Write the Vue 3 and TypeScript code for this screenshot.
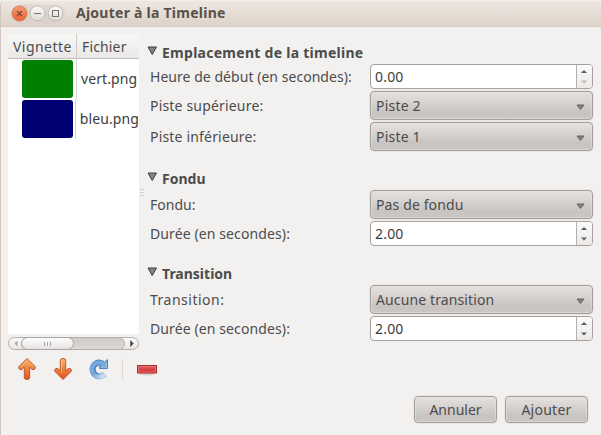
<script setup lang="ts">
import { ref } from 'vue'

interface Field {
  label: string
  kind: 'spin' | 'combo'
  value: string
  fit: string
  valueFit?: string
  atMin?: boolean
}

interface Section {
  title: string
  fit: string
  fields: Field[]
}

const files = ref([
  { name: 'vert.png', tone: 'green' },
  { name: 'bleu.png', tone: 'navy' },
])

const sections = ref<Section[]>([
  {
    title: 'Emplacement de la timeline',
    fit: 'fit-place',
    fields: [
      { label: 'Heure de début (en secondes):', kind: 'spin', value: '0.00', fit: 'fit-start', atMin: true },
      { label: 'Piste supérieure:', kind: 'combo', value: 'Piste 2', fit: 'fit-track-label' },
      { label: 'Piste inférieure:', kind: 'combo', value: 'Piste 1', fit: 'fit-track-label' },
    ],
  },
  {
    title: 'Fondu',
    fit: 'fit-fade',
    fields: [
      { label: 'Fondu:', kind: 'combo', value: 'Pas de fondu', fit: 'fit-fade', valueFit: 'fit-choice' },
      { label: 'Durée (en secondes):', kind: 'spin', value: '2.00', fit: 'fit-length' },
    ],
  },
  {
    title: 'Transition',
    fit: 'fit-fade',
    fields: [
      { label: 'Transition:', kind: 'combo', value: 'Aucune transition', fit: 'fit-transition', valueFit: 'fit-choice' },
      { label: 'Durée (en secondes):', kind: 'spin', value: '2.00', fit: 'fit-length' },
    ],
  },
])
</script>

<template>
  <div class="window">
    <header class="titlebar">
      <div class="controls">
        <svg width="58" height="20" viewBox="0 0 58 20">
          <defs>
            <linearGradient id="close" x1="0" y1="0" x2="0" y2="1">
              <stop offset="0" stop-color="#f79a70" />
              <stop offset="1" stop-color="#ea6336" />
            </linearGradient>
            <linearGradient id="round" x1="0" y1="0" x2="0" y2="1">
              <stop offset="0" stop-color="#fcfbfa" />
              <stop offset="1" stop-color="#ded9d4" />
            </linearGradient>
          </defs>
          <rect x="1" y="1.5" width="54" height="18" rx="9" fill="#d8cfc7" opacity=".6" />
          <circle cx="9.5" cy="10.5" r="7.6" fill="url(#close)" stroke="#c9755a" stroke-width=".7" />
          <circle cx="27.5" cy="10.5" r="7.4" fill="url(#round)" stroke="#b8aea6" stroke-width=".7" />
          <circle cx="45.5" cy="10.5" r="7.4" fill="url(#round)" stroke="#b8aea6" stroke-width=".7" />
          <path d="M7 8l5 5M12 8l-5 5" stroke="#7c4330" stroke-width="1.2" />
          <path d="M24 10.5h7" stroke="#77726b" stroke-width="1" />
          <rect x="42.5" y="7.5" width="6" height="6" fill="none" stroke="#77726b" />
        </svg>
      </div>
      <h1>Ajouter à la Timeline</h1>
    </header>

    <main class="content">
      <section class="browser">
        <div class="list">
          <div class="list-head">
            <span class="col-thumb">Vignette</span>
            <span class="col-file">Fichier</span>
          </div>
          <div v-for="file in files" :key="file.name" class="list-row">
            <div class="cell-thumb"><i class="thumb" :class="file.tone" /></div>
            <span class="cell-name">{{ file.name }}</span>
          </div>
        </div>

        <div class="scrollbar">
          <svg class="scroll-arrow" width="12" height="13" viewBox="0 0 12 13"><path d="M8.5 3.5v6L5.5 6.500z" fill="#aaa6a3" /></svg>
          <div class="trough"><div class="slider"><i /><i /><i /></div></div>
          <svg class="scroll-arrow" width="13" height="13" viewBox="0 0 13 13"><path d="M5.500 3.500v6l3-3z" fill="#4c4c4c" stroke="#4c4c4c" stroke-width=".5" /></svg>
        </div>

        <div class="toolbar">
          <svg class="tool" width="20" height="24" viewBox="0 0 20 24">
            <defs>
              <linearGradient id="up" x1="0" y1="0" x2="0" y2="1">
                <stop offset="0" stop-color="#f5b467" />
                <stop offset="1" stop-color="#e5501b" />
              </linearGradient>
            </defs>
            <path d="M10 1.500L18 9.500Q19 11 17.500 12.200Q16 13.200 14.700 12L12.700 10.200V20.500Q12.700 22.500 10 22.500Q7.300 22.500 7.300 20.500V10.200L5.300 12Q4 13.200 2.500 12.200Q1 11 2 9.500Z" fill="url(#up)" stroke="#b85a2c" stroke-linejoin="round" />
            <path d="M3.500 10.300L10 3.500L16.500 10.300" fill="none" stroke="#f8c893" stroke-width=".8" opacity=".8" />
          </svg>
          <svg class="tool" width="20" height="24" viewBox="0 0 20 24">
            <path d="M10 22.500L18 14.500Q19 13 17.500 11.800Q16 10.800 14.700 12L12.700 13.800V3.500Q12.700 1.500 10 1.500Q7.300 1.500 7.300 3.500V13.800L5.300 12Q4 10.800 2.500 11.800Q1 13 2 14.500Z" fill="url(#up)" stroke="#b85a2c" stroke-linejoin="round" />
            <path d="M8.500 15.500V4Q8.500 2.800 10 2.800Q11.500 2.800 11.500 4" fill="none" stroke="#f8c893" stroke-width=".8" opacity=".8" />
          </svg>
          <svg class="tool redo" width="22" height="24" viewBox="0 0 22 24">
            <defs>
              <linearGradient id="fade" x1="0" y1="0" x2="1" y2="1">
                <stop offset=".6" stop-color="#4e87bf" />
                <stop offset=".95" stop-color="#b9d1ea" />
              </linearGradient>
              <linearGradient id="fade-inner" x1="0" y1="0" x2="1" y2="1">
                <stop offset=".5" stop-color="#76a8db" />
                <stop offset=".95" stop-color="#cfe0f1" />
              </linearGradient>
            </defs>
            <path d="M14.800 6.800Q12.800 5.500 10.800 5.500A7 7 0 1 0 17 17" fill="none" stroke="url(#fade)" stroke-width="6" />
            <path d="M16.500 5L19.500 2.500V11.500H11.500V9.500L13 8.500Z" fill="#76a8db" stroke="#4e87bf" stroke-linejoin="round" />
            <path d="M16 7.400Q13.500 5.500 10.800 5.500A7 7 0 1 0 16.500 16.500" fill="none" stroke="url(#fade-inner)" stroke-width="4" />
            <path d="M13.500 10.200H18.300V5.200" fill="none" stroke="#a6c9ec" stroke-width=".8" />
          </svg>
          <i class="divider" />
          <svg class="tool minus" width="22" height="14" viewBox="0 0 22 14">
            <defs>
              <linearGradient id="red" x1="0" y1="0" x2="0" y2="1">
                <stop offset="0" stop-color="#e26060" />
                <stop offset="1" stop-color="#d42c2c" />
              </linearGradient>
            </defs>
            <ellipse cx="11" cy="11" rx="8" ry="1.500" fill="#d4d0cd" />
            <rect x="1.500" y="2.500" width="19" height="7.500" fill="url(#red)" stroke="#a82c30" />
            <rect x="2.500" y="3.500" width="17" height="5.500" fill="none" stroke="#e8807d" opacity=".7" />
          </svg>
        </div>
      </section>

      <div class="grip"><i /><i /><i /></div>

      <form class="form" @submit.prevent>
        <section v-for="section in sections" :key="section.title" class="group">
          <h2>
            <svg width="11" height="10" viewBox="0 0 11 10"><path d="M1 1h8.500L5.250 8.500z" fill="#858585" stroke="#3c3c3c" stroke-linejoin="round" /></svg>
            <span :class="section.fit">{{ section.title }}</span>
          </h2>
          <div v-for="field in section.fields" :key="field.label" class="row">
            <label><span :class="field.fit">{{ field.label }}</span></label>
            <div v-if="field.kind === 'spin'" class="spin">
              <span class="spin-value">{{ field.value }}</span>
              <div class="spin-steps">
                <svg width="16" height="23" viewBox="0 0 16 23">
                  <path d="M5 8h6L8 5z" fill="#5c5c5c" />
                  <path d="M5 15.500h6l-3 3z" :fill="field.atMin ? '#b9b6b4' : '#5c5c5c'" />
                </svg>
              </div>
            </div>
            <div v-else class="combo">
              <span :class="field.valueFit ?? 'fit-track'">{{ field.value }}</span>
              <svg width="9" height="7" viewBox="0 0 9 7"><path d="M1 1h7L4.500 5.500z" fill="#858585" stroke="#646260" stroke-linejoin="round" /></svg>
            </div>
          </div>
        </section>
        <footer class="actions">
          <button type="button">Annuler</button>
          <button type="button" class="fit-add">Ajouter</button>
        </footer>
      </form>
    </main>
  </div>
</template>

<style>
body {
  margin: 0;
  background: #f2f1f0;
}
</style>

<style scoped>
* {
  box-sizing: border-box;
}

.window {
  display: flex;
  flex-direction: column;
  width: 601px;
  height: 435px;
  overflow: hidden;
  border-left: 1px solid #d2c8c0;
  border-radius: 5px 5px 0 0;
  background: #f2f1f0;
  color: #4c4c4c;
  font-family: "Noto Sans", "Open Sans", sans-serif;
  font-size: 14px;
  line-height: 20px;
  white-space: nowrap;
}

.titlebar {
  display: flex;
  flex: none;
  align-items: center;
  height: 27px;
  padding-left: 9px;
  border-top: 1px solid #f4eeea;
  border-bottom: 1px solid #d6ccc4;
  background: linear-gradient(#eee7e1, #ddd2c9);
}

.controls {
  display: flex;
  margin-top: -2px;
}

h1 {
  margin: -1px 0 0 8px;
  color: #59524c;
  font-size: 14px;
  letter-spacing: 0.25px;
  line-height: 20px;
}

.content {
  display: flex;
  flex: 1;
  padding: 7px 8px 0 7px;
}

.browser {
  flex: none;
  width: 131px;
}

.list {
  height: 300px;
  overflow: hidden;
  background: #fff;
  color: #3c3c3c;
}

.list-head {
  display: flex;
  height: 25px;
  border-bottom: 1px solid #c2beba;
  background: linear-gradient(#f8f8f7, #e9e8e7);
  color: #4c4c4c;
  line-height: 25px;
}

.col-thumb {
  width: 69px;
  padding-left: 5px;
  border-right: 1px solid #cfccca;
  letter-spacing: 0.45px;
}

.col-file {
  padding-left: 5px;
  letter-spacing: 0.15px;
}

.list-row {
  display: flex;
  height: 40px;
}

.cell-thumb {
  width: 69px;
  padding: 1px 0 0 14px;
  border-right: 1px solid #d5d5d5;
}

.thumb {
  display: block;
  width: 51px;
  height: 38px;
  border-radius: 3px;
}

.green {
  background: #008000;
}

.navy {
  background: #000074;
}

.cell-name {
  padding-left: 4px;
  letter-spacing: 0.1px;
  line-height: 40px;
}

.scrollbar {
  display: flex;
  height: 13px;
  margin-top: 3px;
  border: 1px solid #b5b0ac;
  border-radius: 7px;
  background: linear-gradient(#fafafa, #e8e6e5);
}

.scroll-arrow {
  flex: none;
  margin-top: -1px;
}

.trough {
  flex: 1;
  margin: -1px 0;
  border: 1px solid #b5b0ac;
  border-radius: 7px;
  background: linear-gradient(#cecac7, #dcd9d6);
}

.slider {
  display: flex;
  justify-content: center;
  align-items: center;
  gap: 2px;
  width: 53px;
  height: 13px;
  margin: -1px;
  border: 1px solid #aaa5a1;
  border-radius: 7px;
  background: linear-gradient(#fdfdfd, #e5e3e2);
}

.slider i {
  width: 1px;
  height: 4px;
  background: #aaa5a1;
}

.toolbar {
  display: flex;
  align-items: center;
  height: 38px;
  padding-left: 9px;
}

.tool {
  flex: none;
}

.tool + .tool {
  margin-left: 16px;
}

.tool + .redo {
  margin-left: 15px;
}

.minus {
  margin-top: 2px;
}

.divider {
  flex: none;
  width: 1px;
  height: 20px;
  margin: 0 13px 0 12px;
  background: #d9d6d4;
}

.grip {
  display: flex;
  flex: none;
  flex-direction: column;
  gap: 2px;
  width: 9px;
  padding: 155px 4px 0 1px;
}

.grip i {
  height: 1px;
  background: #cfccca;
}

.form {
  flex: 1;
}

h2 {
  display: flex;
  align-items: center;
  height: 24px;
  margin: 0;
  font-size: 14px;
}

h2 svg {
  margin: -2px 4px 0 -1px;
}

h2 span {
  margin-top: 2px;
}

.group:first-child {
  padding-top: 6px;
}

.group + .group {
  padding-top: 13px;
}

.row {
  display: flex;
  align-items: center;
  margin-bottom: 2px;
}

label {
  width: 222px;
  padding-left: 2px;
}

.fit-place {
  letter-spacing: 0.27px;
}

.fit-start {
  letter-spacing: 0.04px;
}

.fit-track-label {
  letter-spacing: 0.18px;
}

.fit-length {
  letter-spacing: 0.11px;
}

.fit-transition {
  letter-spacing: 0.5px;
}

.fit-track {
  letter-spacing: 0.2px;
}

.fit-choice {
  letter-spacing: 0.12px;
}

.spin,
.combo {
  display: flex;
  width: 223px;
  border: 1px solid #a5a09c;
  border-radius: 4px;
}

.spin {
  height: 25px;
  background: #fff;
  color: #3c3c3c;
  line-height: 23px;
}

.spin-value {
  flex: 1;
  padding-left: 4px;
  letter-spacing: 0.2px;
}

.spin-steps {
  width: 16px;
  border-left: 1px solid #b5b0ac;
  border-radius: 0 3px 3px 0;
  background: linear-gradient(#fbfbfb, #ebe9e8);
}

.spin-steps svg {
  display: block;
  margin-left: -1px;
}

.combo {
  align-items: center;
  justify-content: space-between;
  height: 29px;
  padding: 0 7px 0 5px;
  background: linear-gradient(#e4e2e0, #c9c4c1 75%, #cbc6c3);
  box-shadow: inset 0 0 0 1px #e6e3e180, 0 0 0 1px #e9e7e5;
}

.combo svg {
  margin-top: 3px;
}

.actions {
  display: flex;
  justify-content: flex-end;
  gap: 8px;
  padding: 53px 5px 0 0;
}

button {
  width: 83px;
  height: 27px;
  padding: 0;
  border: 1px solid #a5a09c;
  border-radius: 4px;
  background: linear-gradient(#e4e2e0, #c9c4c1 75%, #cbc6c3);
  box-shadow: inset 0 0 0 1px #e6e3e180, 0 0 0 1px #e9e7e5;
  color: #4c4c4c;
  font: inherit;
}

.fit-add {
  letter-spacing: 0.25px;
}
</style>
